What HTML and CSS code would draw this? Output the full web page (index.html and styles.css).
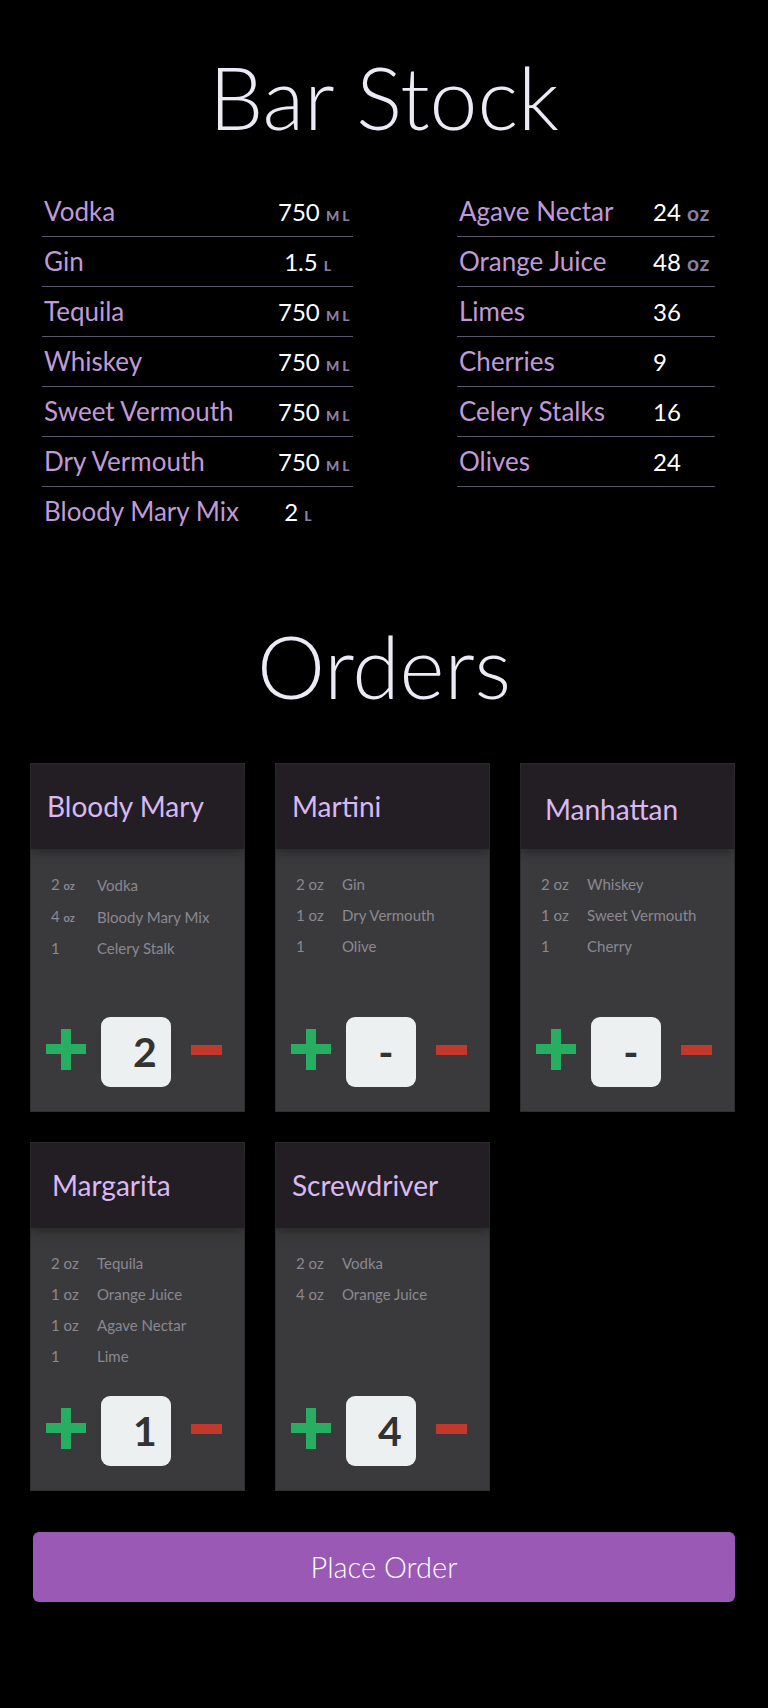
FILE: index.html
```
<!DOCTYPE html>
<html lang="en">
<head>
<meta charset="utf-8">
<title>Bar Stock</title>
<link rel="stylesheet" href="styles.css">
</head>
<body>
<h1 class="page-title page-title--stock">Bar Stock</h1>
<section class="stock">
  <div class="stock-list stock-list--left">
    <div class="stock-row"><span class="stock-name">Vodka</span><span class="stock-qty">750 <span class="unit">ML</span></span></div>
    <div class="stock-row"><span class="stock-name">Gin</span><span class="stock-qty">&nbsp;1.5 <span class="unit">L</span></span></div>
    <div class="stock-row"><span class="stock-name">Tequila</span><span class="stock-qty">750 <span class="unit">ML</span></span></div>
    <div class="stock-row"><span class="stock-name">Whiskey</span><span class="stock-qty">750 <span class="unit">ML</span></span></div>
    <div class="stock-row"><span class="stock-name">Sweet Vermouth</span><span class="stock-qty">750 <span class="unit">ML</span></span></div>
    <div class="stock-row"><span class="stock-name">Dry Vermouth</span><span class="stock-qty">750 <span class="unit">ML</span></span></div>
    <div class="stock-row stock-row--last"><span class="stock-name">Bloody Mary Mix</span><span class="stock-qty">&nbsp;2 <span class="unit">L</span></span></div>
  </div>
  <div class="stock-list stock-list--right">
    <div class="stock-row"><span class="stock-name">Agave Nectar</span><span class="stock-qty">24 <span class="unit unit--oz">oz</span></span></div>
    <div class="stock-row"><span class="stock-name">Orange Juice</span><span class="stock-qty">48 <span class="unit unit--oz">oz</span></span></div>
    <div class="stock-row"><span class="stock-name">Limes</span><span class="stock-qty">36</span></div>
    <div class="stock-row"><span class="stock-name">Cherries</span><span class="stock-qty">9</span></div>
    <div class="stock-row"><span class="stock-name">Celery Stalks</span><span class="stock-qty">16</span></div>
    <div class="stock-row"><span class="stock-name">Olives</span><span class="stock-qty">24</span></div>
  </div>
</section>

<h1 class="page-title page-title--orders">Orders</h1>
<section class="orders">
  <article class="card">
    <header class="card-head"><h2 class="card-title">Bloody Mary</h2></header>
    <div class="card-body">
      <table class="ingredients">
        <tr><td class="ing-qty">2 <span class="ing-unit">oz</span></td><td class="ing-name">Vodka</td></tr>
        <tr><td class="ing-qty">4 <span class="ing-unit">oz</span></td><td class="ing-name">Bloody Mary Mix</td></tr>
        <tr><td class="ing-qty">1</td><td class="ing-name">Celery Stalk</td></tr>
      </table>
      <div class="controls">
        <span class="btn-plus"></span>
        <span class="count">2</span>
        <span class="btn-minus"></span>
      </div>
    </div>
  </article>
  <article class="card">
    <header class="card-head"><h2 class="card-title">Martini</h2></header>
    <div class="card-body">
      <table class="ingredients">
        <tr><td class="ing-qty">2 oz</td><td class="ing-name">Gin</td></tr>
        <tr><td class="ing-qty">1 oz</td><td class="ing-name">Dry Vermouth</td></tr>
        <tr><td class="ing-qty">1</td><td class="ing-name">Olive</td></tr>
      </table>
      <div class="controls">
        <span class="btn-plus"></span>
        <span class="count count--empty">-</span>
        <span class="btn-minus"></span>
      </div>
    </div>
  </article>
  <article class="card">
    <header class="card-head"><h2 class="card-title card-title--low">Manhattan</h2></header>
    <div class="card-body">
      <table class="ingredients">
        <tr><td class="ing-qty">2 oz</td><td class="ing-name">Whiskey</td></tr>
        <tr><td class="ing-qty">1 oz</td><td class="ing-name">Sweet Vermouth</td></tr>
        <tr><td class="ing-qty">1</td><td class="ing-name">Cherry</td></tr>
      </table>
      <div class="controls">
        <span class="btn-plus"></span>
        <span class="count count--empty">-</span>
        <span class="btn-minus"></span>
      </div>
    </div>
  </article>
  <article class="card">
    <header class="card-head"><h2 class="card-title card-title--inset">Margarita</h2></header>
    <div class="card-body">
      <table class="ingredients">
        <tr><td class="ing-qty">2 oz</td><td class="ing-name">Tequila</td></tr>
        <tr><td class="ing-qty">1 oz</td><td class="ing-name">Orange Juice</td></tr>
        <tr><td class="ing-qty">1 oz</td><td class="ing-name">Agave Nectar</td></tr>
        <tr><td class="ing-qty">1</td><td class="ing-name">Lime</td></tr>
      </table>
      <div class="controls">
        <span class="btn-plus"></span>
        <span class="count">1</span>
        <span class="btn-minus"></span>
      </div>
    </div>
  </article>
  <article class="card">
    <header class="card-head"><h2 class="card-title">Screwdriver</h2></header>
    <div class="card-body">
      <table class="ingredients">
        <tr><td class="ing-qty">2 oz</td><td class="ing-name">Vodka</td></tr>
        <tr><td class="ing-qty">4 oz</td><td class="ing-name">Orange Juice</td></tr>
      </table>
      <div class="controls">
        <span class="btn-plus"></span>
        <span class="count">4</span>
        <span class="btn-minus"></span>
      </div>
    </div>
  </article>
</section>

<button class="place-order" type="button">Place Order</button>
</body>
</html>
```

FILE: styles.css
```
* { box-sizing: border-box; }

html, body {
  margin: 0;
  padding: 0;
  background: #000;
}

body {
  font-family: Lato, "Open Sans", "Noto Sans", sans-serif;
  color: #fff;
  width: 768px;
  min-height: 1708px;
}

.page-title {
  margin: 0;
  font-size: 86px;
  line-height: 86px;
  font-weight: 300;
  text-align: center;
  color: #ecebf5;
}

.page-title--stock { padding-top: 54px; }
.page-title--orders { margin-top: 86px; }

/* ---------- Stock ---------- */
.stock {
  display: grid;
  grid-template-columns: 311px 258px;
  column-gap: 104px;
  padding-left: 42px;
  margin-top: 47px;
}

.stock-row {
  display: grid;
  height: 50px;
  align-items: baseline;
  border-bottom: 1px solid #5d566a;
  font-size: 26px;
  line-height: 49px;
}

.stock-row--last { border-bottom: 0; }

.stock-list--left .stock-row { grid-template-columns: 236px 1fr; }
.stock-list--right .stock-row { grid-template-columns: 196px 1fr; }

.stock-name {
  padding-left: 2px;
  color: #c09ad8;
  white-space: nowrap;
}

.stock-qty {
  color: #fff;
  font-size: 24px;
  white-space: nowrap;
}

.unit {
  font-size: 14px;
  font-weight: 900;
  letter-spacing: 3px;
  color: #8d7f9f;
}

.unit--oz {
  font-size: 21px;
  font-weight: 700;
  letter-spacing: 1px;
}

/* ---------- Orders ---------- */
.orders {
  display: grid;
  grid-template-columns: repeat(3, 215px);
  grid-auto-rows: 349px;
  column-gap: 30px;
  row-gap: 30px;
  padding-left: 30px;
  margin-top: 54px;
}

.card {
  display: flex;
  flex-direction: column;
  background: #3a3a3c;
  border: 1px solid #2e2e30;
}

.card-head {
  height: 85px;
  flex: none;
  background: #231e24;
  box-shadow: 0 3px 10px rgba(0, 0, 0, 0.35);
  position: relative;
  z-index: 1;
}

.card-title {
  margin: 0;
  padding: 25px 0 0 16px;
  font-size: 28px;
  line-height: 34px;
  font-weight: 400;
  color: #d9b9f2;
  white-space: nowrap;
}

.card-title--low { padding: 28px 0 0 24px; }
.card-title--inset { padding-left: 21px; }

.card-body {
  flex: 1;
  display: flex;
  flex-direction: column;
  padding: 20px 0 24px 20px;
}

.ingredients {
  border-collapse: collapse;
  font-size: 15px;
  color: #8b8891;
}

.ingredients td {
  padding: 0;
  height: 31px;
  line-height: 31px;
  white-space: nowrap;
}

.ing-qty { width: 46px; padding-left: 1px; }

.ing-unit {
  font-size: 11px;
  font-weight: 700;
}

.controls {
  margin-top: auto;
  display: flex;
  align-items: center;
  margin-left: -5px;
}

.btn-plus {
  position: relative;
  width: 40px;
  height: 41px;
  margin-bottom: 6px;
  flex: none;
}

.btn-plus::before,
.btn-plus::after {
  content: "";
  position: absolute;
  background: #27ae60;
}

.btn-plus::before {
  left: 15px;
  top: 0;
  width: 10px;
  height: 41px;
}

.btn-plus::after {
  left: 0;
  top: 15px;
  width: 40px;
  height: 10px;
}

.count {
  width: 70px;
  height: 70px;
  margin-left: 15px;
  border-radius: 9px;
  background: #ecf0f1;
  color: #333;
  font-size: 41px;
  font-weight: 700;
  line-height: 70px;
  text-align: center;
  padding-left: 18px;
  flex: none;
}

.count--empty { padding-left: 10px; }

.btn-minus {
  width: 31px;
  height: 10px;
  margin-left: 20px;
  margin-bottom: 5px;
  background: #c0392b;
  flex: none;
}

/* ---------- Button ---------- */
.place-order {
  display: block;
  width: 702px;
  height: 70px;
  margin: 41px 0 0 33px;
  border: 0;
  border-radius: 6px;
  background: #9b59b6;
  color: #fff;
  font-family: Lato, "Open Sans", sans-serif;
  font-size: 29px;
  font-weight: 300;
  line-height: 70px;
  padding: 0;
}
```
